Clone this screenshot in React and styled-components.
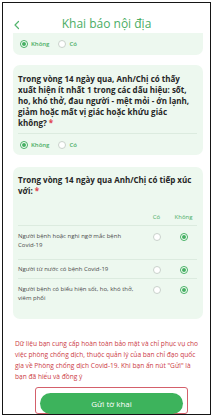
import React, { useState } from 'react';
import styled, { createGlobalStyle } from 'styled-components';

const GlobalStyle = createGlobalStyle`
  body {
    margin: 0;
    background: #fff;
    font-family: "Open Sans", "Noto Sans", sans-serif;
  }
  * { box-sizing: border-box; }
`;

const Frame = styled.div`
  width: 209px;
  height: 413px;
  margin: 2px 0 0 2px;
  border: 1px solid #161616;
  background: #fff;
  overflow: hidden;
  display: flex;
  flex-direction: column;
`;

const Header = styled.div`
  height: 35px;
  padding: 0 8px 1px 10px;
  display: flex;
  align-items: flex-end;
`;

const BackButton = styled.button`
  border: none;
  background: none;
  padding: 0;
  color: #52b46d;
  display: flex;
  align-items: center;
  margin-bottom: 2px;
`;

const Title = styled.h1`
  flex: 1;
  margin: 0;
  text-align: center;
  font-size: 12px;
  line-height: 16px;
  font-weight: 400;
  color: #4aad64;
  padding-right: 10px;
`;

const Content = styled.div`
  flex: 1;
  padding: 0 7px 0 10px;
  display: flex;
  flex-direction: column;
`;

const Card = styled.div`
  background: #edf8ef;
  border-radius: ${p => (p.$cut ? '0 0 7px 7px' : '7px')};
  padding: ${p => p.$pad || '8px 6px 0 5px'};
  margin-top: ${p => p.$top || 0}px;
`;

const Question = styled.p`
  margin: 0;
  font-size: 8px;
  line-height: 11px;
  font-weight: 700;
  color: #262626;
`;

const Required = styled.span`
  color: #e0404a;
`;

const Divider = styled.div`
  height: 1px;
  margin-top: ${p => p.$top || 0}px;
  background: #dcebdf;
`;

const RadioRow = styled.div`
  display: flex;
  align-items: center;
  gap: 9px;
  height: ${p => p.$h || 21}px;
  padding-left: 2px;
`;

const RadioLabel = styled.label`
  display: flex;
  align-items: center;
  gap: 3px;
  font-size: 6px;
  font-weight: 600;
  color: #4aad64;
  cursor: pointer;
`;

const RadioDot = styled.span`
  width: 8px;
  height: 8px;
  border-radius: 50%;
  border: 1px solid ${p => (p.$on ? '#45b062' : '#c9d2cb')};
  background: #fff;
  display: flex;
  align-items: center;
  justify-content: center;
  flex-shrink: 0;

  &::after {
    content: '';
    width: 4px;
    height: 4px;
    border-radius: 50%;
    background: ${p => (p.$on ? '#45b062' : 'transparent')};
  }
`;

const Table = styled.div`
  margin-top: 17px;
`;

const TableRow = styled.div`
  display: grid;
  grid-template-columns: 1fr 27px 27px;
  align-items: start;
  padding: ${p => p.$pad || '6px 0'};
  border-bottom: ${p => (p.$last ? 'none' : '1px solid #dcebdf')};
`;

const ColHead = styled.span`
  font-size: 6px;
  color: #4aad64;
  text-align: center;
`;

const RowText = styled.span`
  font-size: 6px;
  line-height: 9px;
  color: #4a4a4a;
  padding-right: 6px;
`;

const Cell = styled.div`
  display: flex;
  justify-content: center;
  padding-top: 1px;
`;

const Notice = styled.p`
  margin: 19px 0 0 2px;
  font-size: 6.6px;
  line-height: 11px;
  color: #cc3b45;
`;

const SubmitWrap = styled.div`
  margin: 5px 0 0 22px;
  width: 153px;
  height: 27px;
  border: 1px solid #d4606b;
  border-radius: 3px;
  padding: 2px 4px;
`;

const SubmitButton = styled.button`
  width: 100%;
  height: 100%;
  border: none;
  border-radius: 11px;
  background: #3db35c;
  color: #fff;
  font-family: inherit;
  font-size: 8px;
`;

const Chevron = () => (
  <svg width="8" height="10" viewBox="0 0 8 10" fill="none">
    <path d="M5.5 1.5L2 5l3.5 3.5" stroke="currentColor" strokeWidth="1.2" strokeLinecap="round" strokeLinejoin="round" />
  </svg>
);

const YesNo = ({ value, onChange, h }) => (
  <RadioRow $h={h}>
    <RadioLabel onClick={() => onChange('no')}>
      <RadioDot $on={value === 'no'} />
      Không
    </RadioLabel>
    <RadioLabel onClick={() => onChange('yes')}>
      <RadioDot $on={value === 'yes'} />
      Có
    </RadioLabel>
  </RadioRow>
);

const contacts = [
  { id: 1, text: 'Người bệnh hoặc nghi ngờ mắc bệnh Covid-19', pad: '6px 0 9px' },
  { id: 2, text: 'Người từ nước có bệnh Covid-19', pad: '5px 0 4px' },
  { id: 3, text: 'Người bệnh có biểu hiện sốt, ho, khó thở, viêm phổi', pad: '6px 0 16px' }
];

const App = () => {
  const [q1, setQ1] = useState('no');
  const [q2, setQ2] = useState('no');
  const [rows, setRows] = useState({ 1: 'no', 2: 'no', 3: 'no' });

  return (
    <>
      <GlobalStyle />
      <Frame>
        <Header>
          <BackButton>
            <Chevron />
          </BackButton>
          <Title>Khai báo nội địa</Title>
        </Header>

        <Content>
          <Card $cut $pad="0 6px 0 5px">
            <YesNo value={q1} onChange={setQ1} h={22} />
          </Card>

          <Card $top={10}>
            <Question>
              Trong vòng 14 ngày qua, Anh/Chị có thấy xuất hiện ít nhất 1 trong các dấu hiệu: sốt,
              ho, khó thở, đau người - mệt mỏi - ớn lạnh, giảm hoặc mất vị giác hoặc khứu giác
              <br />
              không? <Required>*</Required>
            </Question>
            <Divider $top={5} />
            <YesNo value={q2} onChange={setQ2} h={21} />
          </Card>

          <Card $top={12} $pad="7px 6px 0 5px">
            <Question>
              Trong vòng 14 ngày qua Anh/Chị có tiếp xúc với: <Required>*</Required>
            </Question>
            <Table>
              <TableRow $pad="0 0 4px">
                <span />
                <ColHead>Có</ColHead>
                <ColHead>Không</ColHead>
              </TableRow>
              {contacts.map((c, i) => (
                <TableRow key={c.id} $pad={c.pad} $last={i === contacts.length - 1}>
                  <RowText>{c.text}</RowText>
                  <Cell onClick={() => setRows({ ...rows, [c.id]: 'yes' })}>
                    <RadioDot $on={rows[c.id] === 'yes'} />
                  </Cell>
                  <Cell onClick={() => setRows({ ...rows, [c.id]: 'no' })}>
                    <RadioDot $on={rows[c.id] === 'no'} />
                  </Cell>
                </TableRow>
              ))}
            </Table>
          </Card>

          <Notice>
            Dữ liệu bạn cung cấp hoàn toàn bảo mật và chỉ phục vụ cho việc phòng chống dịch,
            thuộc quản lý của ban chỉ đạo quốc gia về Phòng chống dịch Covid-19. Khi bạn ấn nút
            "Gửi" là bạn đã hiểu và đồng ý
          </Notice>

          <SubmitWrap>
            <SubmitButton>Gửi tờ khai</SubmitButton>
          </SubmitWrap>
        </Content>
      </Frame>
    </>
  );
};

export default App;
